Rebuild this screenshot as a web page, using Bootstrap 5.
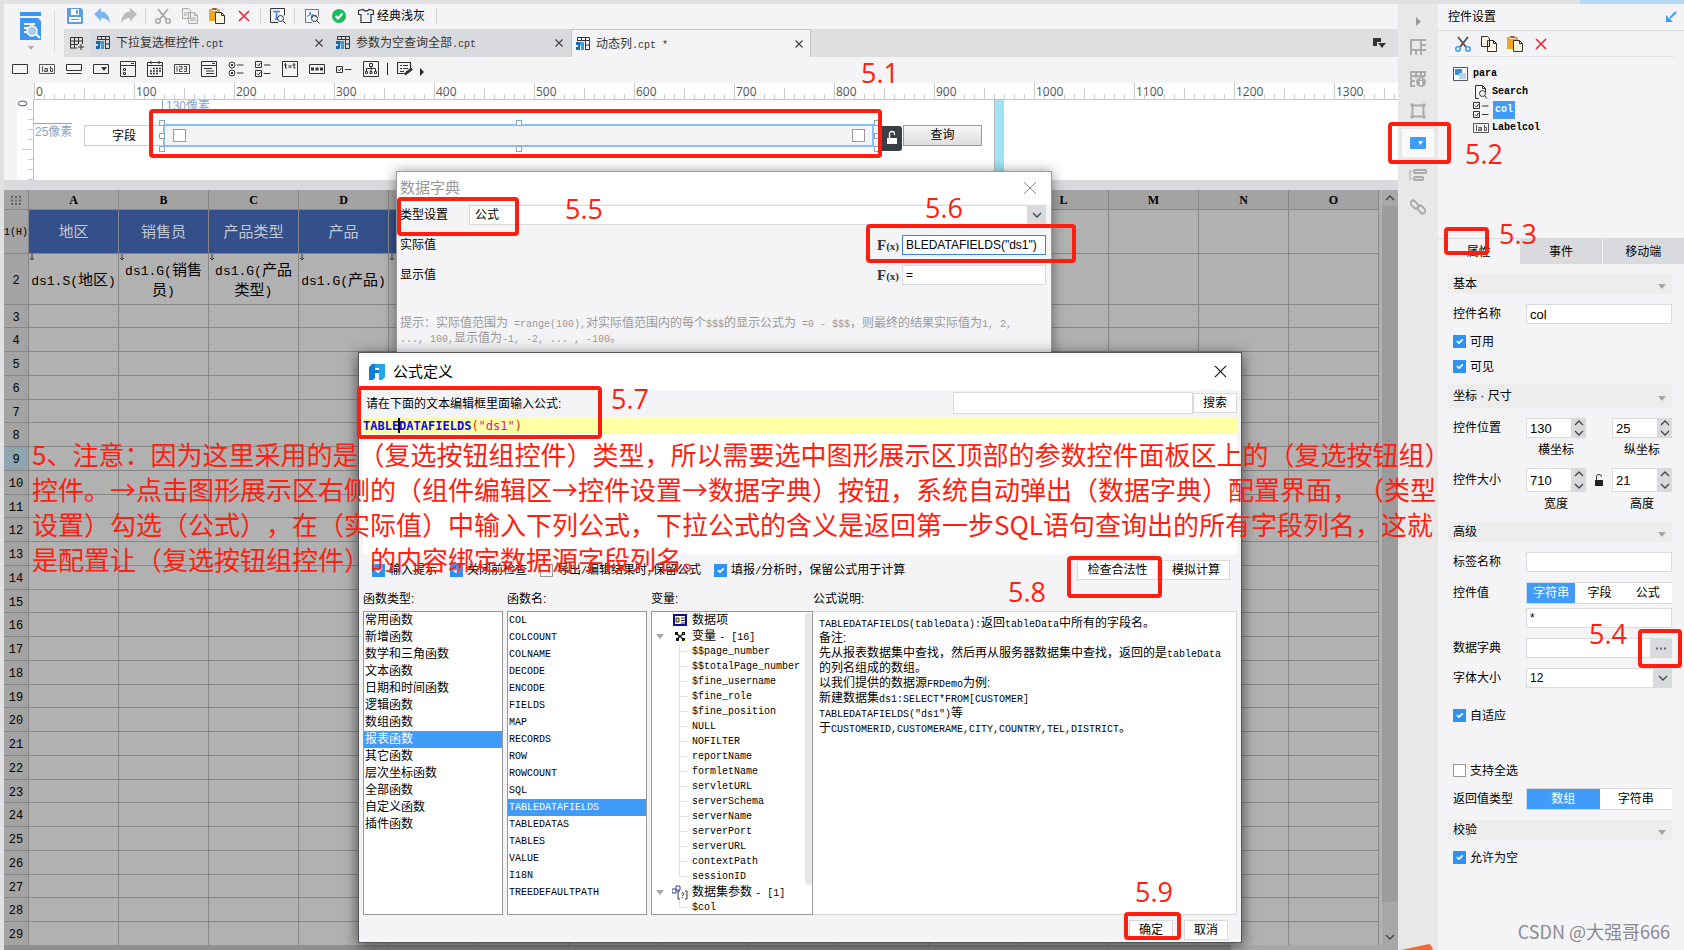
<!DOCTYPE html>
<html lang="zh-CN">
<head>
<meta charset="utf-8">
<meta name="viewport" content="width=device-width, initial-scale=1">
<title>动态列.cpt - 报表设计器</title>
<link href="https://cdn.jsdelivr.net/npm/bootstrap@5.3.0/dist/css/bootstrap.min.css" rel="stylesheet">
<style>
:root{--pane:#f4f4f7;--edge:#d9dadd;--blue:#419bf9;--red:#ff1e10}
body{font:12px/16px "Liberation Sans","Noto Sans CJK SC",sans-serif;color:#000;background:#e8e8e8;overflow:hidden}
.mn{font-family:"Liberation Mono","Noto Sans CJK SC",monospace;font-size:10px;line-height:10px}
svg{display:block;fill:none;stroke:#333;stroke-width:1}
.i16{width:16px;height:16px;flex:none}
.app{height:100vh;padding:4px 0 0 4px;background:#e0e0e3;overflow:hidden}
.app-accent{top:0;right:0;width:104px;height:4px;background:#b5daf2}
.work{min-width:0;background:var(--pane)}
.ibtn{width:23px;height:24px;padding:0;border:0;border-radius:0;display:flex;align-items:center;justify-content:center}
.vsep{width:1px;height:16px;background:#d0d1d4;margin:0 1px}
.brand{width:59px;height:53px;border:0;background:none;padding:0 8px 0 0}
.brand-line{width:1px;height:42px;background:#dcdce0}
.toolbar{height:25px;padding-bottom:2px}
.theme{padding:0 0 0 4px;border:0;background:none;gap:3px;margin-right:6px}
.tabs{height:28px;background:#dfdfe2;margin-left:1px}
.tab{width:240px;padding:0 7px 0 4px;gap:5px;background:#d9dadd;color:#333}
.tab.first{width:241px;padding-left:5px}
.tab.on{background:var(--pane);border:1px solid #c4c5c8;border-width:1px 1px 0;padding:0 6px 0 3px}
.tab-add{width:26px;background:#dfdfe2}
.x-btn{border:0;background:none;padding:0;width:10px;height:10px}
.widgets{height:26px;padding:0 0 3px 4px}
.ruler{height:17px;margin-left:30px;background:
 linear-gradient(90deg,#ccc 1px,transparent 1px) 0 0/100px 100% repeat-x,
 linear-gradient(90deg,#ccc 1px,transparent 1px) 50px 100%/100px 11px repeat-x,
 linear-gradient(90deg,#ccc 1px,transparent 1px) 0 100%/10px 5px repeat-x,#fff;
 border-bottom:1px solid #c4c4c4;font-size:12px;color:#555;overflow:hidden}
.ruler span{width:100px;flex:none;padding-left:2px;line-height:17px;font-family:"Open Sans",sans-serif}
.design{height:80px;background:#fff;overflow:hidden}
.vruler{width:30px;flex:none;border-left:13px solid var(--pane);border-right:1px solid #c4c4c4;background:
 linear-gradient(#ccc 1px,transparent 1px) 100% 49px/11px 100px repeat-y,
 linear-gradient(#ccc 1px,transparent 1px) 100% 9px/5px 10px repeat-y,#fff;writing-mode:vertical-rl;font:12px/22px "Open Sans",sans-serif;color:#555}
.sheet{width:961px;border-right:1px solid #bbb}
.sheet-end{width:9px;background:#9fe3f4}
.px-note{color:#8aa6c0}
.n130{left:128px;top:-2px;height:11px;overflow:hidden;border-left:1px solid #8aa6c0;padding-left:3px}
.n25{left:0;top:23px;border-top:1px solid #8aa6c0;padding-left:1px}
.lblcol{left:50px;top:25px;width:80px;height:21px;border:1px solid #ccc;line-height:21px;padding-left:27px}
.group-sel{left:129px;top:24px;width:711px;height:23px;border:2px solid #8abff8;background:var(--pane);padding:0 7px 0 8px}
.cb.cb{width:13px;height:13px;border:1px solid #999;border-radius:0;margin:0;flex:none;background-color:#fff;box-shadow:none}
.cb.cb:checked{background-color:#2f91f0;border-color:#2f91f0}
.hd{width:6px;height:6px;border:1px solid #8aa6c0;background:#fff}
.lockbox{left:848px;top:26px;width:20px;height:25px;background:#3a3e43;border:0;border-radius:0 3px 3px 0;padding:4px 3px}
.query{left:869px;top:25px;width:79px;height:21px;border:1px solid #999;background:linear-gradient(#f6f6f6,#dedede);padding:0;font-size:12px;line-height:18px}
.strip{height:10px;background:#d9dadd}
.gridbox{min-height:0;overflow:hidden;background:#b1b1b1}
.rpt{table-layout:fixed;border-collapse:separate;border-spacing:0;width:1375px}
.rpt th,.rpt td{padding:0;border:solid #868686;border-width:0 1px 1px 0;text-align:center;font-weight:400;vertical-align:middle;overflow:hidden}
.rpt th{background:#a3a3a3}
.rpt thead th{height:20px;padding-top:2px;font:bold 12px/16px "Liberation Serif",serif}
.rpt tbody th{padding-top:4px;font:12px/14px "Liberation Mono",monospace;white-space:nowrap}
.rpt tbody .hrow{font-size:10px;padding-top:3px}
.rpt .sel{background:#8fa5ad}
.rpt .hcell td{color:#c3c9d4;font-size:15px;padding-top:2px}
.rpt .hcell td:not(:empty){background:#34508a}
.rpt .dcell td{font:15px/18px "Noto Sans CJK SC",sans-serif;position:relative;padding-top:2px}
.rpt .dcell .mm{font:13px/16px "Liberation Mono",monospace}
.dn{position:absolute;left:0;top:0;width:6px;height:7px}
.sbar{width:16px;flex:none;background:#a8a8a8}
.sbar-thumb{flex:1;background:#9c9c9c}
.sbar-rest{height:27px}
.hbar{height:5px;background:#a8a8a8}
.hbar-thumb{width:88%;background:#8f8f8f}
.rail{width:40px;flex:none;background:#e8e8e8;padding-top:5px}
.rail .btn{width:32px;height:28px;padding:0;border:0;border-radius:0;margin-bottom:4px;display:flex;align-items:center;justify-content:center}
.rail .fold{height:24px;margin-bottom:0}
.rail .on{background:#fafafb}
.rail svg{stroke:#aaa;stroke-width:2}
.panel{width:246px;flex:none;background:var(--pane)}
.p-title{height:27px;padding:0 7px 0 10px;border-bottom:1px solid #d9dadd}
.p-tools{height:26px;margin:0 10px;gap:3px;border-bottom:1px solid #e2e2e5;padding-left:3px}
.wtree{padding:8px 0 0 15px;height:181px}
.wtree li{height:18px;gap:4px}
.wtree .kid{padding-left:20px;gap:3px}
.wtree .hit{background:var(--blue);color:#fff;padding:0 2px;margin-left:1px}
.wtree .mn{font-family:"Liberation Mono",monospace;font-size:10px;line-height:18px;font-weight:700}
.ptabs{height:26px;gap:1px;border-top:1px solid #d9dadd}
.ptabs button{flex:1;border:0;background:#d9dadd;padding:0;font-size:12px}
.ptabs .on{background:var(--pane)}
.props{padding:10px 12px 0 10px}
.sec{height:20px;background:#ededee;padding:0 5px;width:100%}
.sec.tall{height:24px}
.tri{width:0;height:0;border:4px solid transparent;border-top:5px solid #a5a5a5;border-bottom:0;margin:4px 1px 0 0}
.prow{display:flex;align-items:center;height:20px}
.prow.h22{height:22px}.prow.h24{height:24px}
.prow>label:first-child,.prow>.cap{width:78px;flex:none;padding-left:5px}
.chk{height:25px;gap:4px;padding-left:5px;display:flex;align-items:center}
.g4{margin-top:4px}.g5{margin-top:5px}.g6{margin-top:6px}.g10{margin-top:10px}.g15{margin-top:15px}.g30{margin-top:30px}
.fld{height:100%;min-height:0;border:1px solid var(--edge);border-radius:0;padding:0 3px;font:12px/16px "Liberation Sans","Noto Sans CJK SC",sans-serif;color:#000;background-color:#fff;min-width:0;box-shadow:none}
.fld.big{font-size:13px}
.grey{background:var(--edge);border:0;padding:0;display:flex;align-items:center;justify-content:center;flex:none}
.spin{width:60px;height:100%}
.spin .grey{width:14px;height:50%}
.sub{height:24px;padding-left:78px;display:flex;align-items:center;justify-content:space-between;text-align:center}
.sub span{width:60px}
.seg{height:100%;border:1px solid var(--edge);border-right:0;flex:1}
.seg button{flex:1;border:0;background:#fff;padding:0;font-size:12px}
.seg .on{background:var(--blue);color:#fff}
.combo{appearance:none;background:#fff}
.arrow{width:19px;height:20px;right:0;top:0;pointer-events:none}
.dlg{background:var(--pane);border:1px solid #9a9a9a;box-shadow:0 1px 12px rgba(0,0,0,.45)}
.dict{left:396px;top:171px;width:656px;height:190px}
.dict-title{height:32px;background:#fff;color:#999;font-size:15px;padding:0 14px 0 3px}
.dict-body{padding:1px 5px 0 3px}
.dict-body .combo{padding-left:5px}
.dict-body .w144{width:144px}
.fx{font:bold 15px/16px "Liberation Serif",serif;color:#333;margin-right:3px}
.fx small{font-size:11px}
.hint{color:#999;line-height:15px;margin-top:31px}
.calc{left:358px;top:352px;width:884px;border-color:#555;box-shadow:0 3px 14px rgba(0,0,0,.6);padding-bottom:2px}
.calc-title{height:37px;background:#fff;font-size:15px;padding:0 14px 0 10px}
.calc-body{padding:0 4px}
.bt{border:1px solid var(--edge);background:#fff;border-radius:0;padding:0;height:20px;font-size:12px;line-height:16px;color:#000}
.find{height:28px;padding-top:2px}
.find label{padding:4px 0 0 3px}
.find .fld{width:240px;height:22px}
.find .bt{width:44px;margin-top:1px}
.editor{height:136px;background:#fff}
.code{height:16px;background:#ffffa6;font:12px/16px "DejaVu Sans Mono",monospace;color:#f01e10}
.code b{color:#0a0ae6}.code i{color:#d5149b;font-style:normal}
.caret{left:35px;top:0;width:2px;height:15px;background:#000}
.opts{height:32px;padding:0 7px 0 9px;gap:13px}
.opts .chk{padding:0;gap:4px}
.cols{gap:4px;padding-top:3px}
.cap-h{height:20px;margin-bottom:2px;line-height:20px}
.lst{height:304px;border:1px solid #999;background:#fff;margin:0;padding:0;list-style:none;overflow:hidden}
.c140{width:140px}.c162{width:162px}
.names li{height:17px;line-height:17px;padding-left:1px}
.names .hit{background:var(--blue);color:#fff}
.vars{padding-left:40px;position:relative}
.vars li{height:15px;line-height:15px;position:relative}
.vars .top{height:16px;line-height:16px}
.vars .top svg{position:absolute;left:-20px;top:1px;width:16px;height:15px}
.vars .kid::before{content:"";position:absolute;left:-13px;top:0;width:9px;height:8px;border:solid #e2e2e2;border-width:0 0 1px 1px}
.vars .kid+.kid::before{top:-8px;height:16px}
.vars .tri{position:absolute;left:-36px;top:6px;margin:0}
.vars .vbar{right:0;top:1px;width:7px;height:272px;background:#e6e6e6;border-radius:3px}
.desc{border-color:var(--edge);border-left:0;padding:4px 12px 0 6px;line-height:15px}
.desc p{margin:0}
.foot{margin-top:5px;padding-right:9px;gap:11px}
.foot .bt{width:44px}
.mark-box{border:4px solid var(--red);border-radius:4px;pointer-events:none}
.mark-no{color:var(--red);font:27px/30px "Open Sans",sans-serif;pointer-events:none}
.remark{left:32px;top:436px;color:var(--red);font:26px/35px "Noto Sans CJK SC",sans-serif;white-space:pre;margin:0;pointer-events:none;text-spacing-trim:space-all;font-kerning:none;font-feature-settings:"chws" 0,"halt" 0}
.wmark{right:14px;bottom:6px;color:#8b8b8f;font:18px/26px "Noto Sans CJK SC",sans-serif}
.sticker{right:251px;bottom:0;width:32px;height:6px}
</style>
</head>
<body>
<svg width="0" height="0" class="position-absolute">
 <symbol id="save" viewBox="0 0 16 16"><path d="M0 1q0-1 1-1h13l2 2v13q0 1-1 1H1q-1 0-1-1z" fill="#5e9fe0" stroke="none"/><path d="M4 1h8v6H4zM2 9h12v5H2z" fill="#fff" stroke="none"/><path d="M9 2h2v4H9zM4 11h8v1H4z" fill="#5e9fe0" stroke="none"/></symbol>
 <symbol id="undo" viewBox="0 0 16 16"><path d="M0 6l7-6v3.500q8 0 9 11.500-3-5-9-5v3.500z" fill="#7db4ee" stroke="none"/></symbol>
 <symbol id="redo" viewBox="0 0 16 16"><path d="M16 6L9 0v3.500q-8 0-9 11.500 3-5 9-5v3.500z" fill="#bbb" stroke="none"/></symbol>
 <symbol id="cut" viewBox="0 0 16 16"><path d="M3 1l8 10M13 1L5 11" stroke="#555" stroke-width="2"/><circle cx="3" cy="13" r="2.200" stroke="#419bf9" stroke-width="1.600"/><circle cx="13" cy="13" r="2.200" stroke="#419bf9" stroke-width="1.600"/></symbol>
 <symbol id="cutg" viewBox="0 0 16 16"><path d="M3 1l8 10M13 1L5 11" stroke="#aaa" stroke-width="2"/><circle cx="3" cy="13" r="2.200" stroke="#aaa" stroke-width="1.600"/><circle cx="13" cy="13" r="2.200" stroke="#aaa" stroke-width="1.600"/></symbol>
 <symbol id="copy" viewBox="0 0 16 16"><path d="M.5.5h6l2 2v8h-8zM6.500 4.500h6l3 3v8h-9z" fill="#fdf6e0"/><path d="M12.500 4.500v3h3"/></symbol>
 <symbol id="copyg" viewBox="0 0 16 16"><path d="M.5.5h6l2 2v8h-8zM6.500 4.500h6l3 3v8h-9zM12.500 4.500v3h3M8 10h6M8 12h6M2 5h4M2 7h3" fill="#eee" stroke="#aaa"/></symbol>
 <symbol id="paste" viewBox="0 0 16 16"><path d="M0 1h3v2h5V1h3v12H0z" fill="#efa81b" stroke="none"/><path d="M3.500.5h4v1h-4z" fill="#b7521c" stroke="#b7521c"/><path d="M6.500 4.500h6l3 3v8h-9z" fill="#fdf6e0"/><path d="M12.500 4.500v3h3"/></symbol>
 <symbol id="del" viewBox="0 0 16 16"><path d="M3 3l10 10M13 3L3 13" stroke="#e8252d" stroke-width="1.600"/></symbol>
 <symbol id="tfind" viewBox="0 0 16 16"><path d="M8 14.500H.5V.5h14v7"/><path d="M3 3.500h7M6.500 3v8M5 11h3" stroke="#3c8fe0" stroke-width="1.600"/><circle cx="10.500" cy="10.500" r="3"/><path d="M13 13l2.500 2.500"/></symbol>
 <symbol id="wave" viewBox="0 0 16 16"><path d="M8 14.500H1.500v-13h13v7" stroke="#777"/><path d="M3 8h2l1-4 2 6 1-4 1 2h3" stroke="#3c8fe0"/><circle cx="10.500" cy="10.500" r="3"/><path d="M13 13l2.500 2.500"/></symbol>
 <symbol id="ok" viewBox="0 0 16 16"><circle cx="8" cy="8" r="7" fill="#17bd5b" stroke="none"/><path d="M4.500 8l2.500 2.500 4.500-5" stroke="#fff" stroke-width="2"/></symbol>
 <symbol id="shirt" viewBox="0 0 16 16"><path d="M5 1.500q3 3 6 0l4.500 1v4H13v8H3v-8H.5v-4z" stroke-width="1.200"/><path d="M9 5h2v2H9z" fill="#419bf9" stroke="none"/></symbol>
 <symbol id="addtab" viewBox="0 0 16 16"><path d="M1.500 13V2.500h12V9M1.500 6h12M5.500 2.500V13M9.500 2.500V9M1 9.500h8M1 13h7M12 9v6M9 12h6"/></symbol>
 <symbol id="cpt" viewBox="0 0 16 16"><path d="M2.500 5V1.500h12v12H10M2 4.500h12M6.500 1.500v3M10.500 1.500v12M10 9h4"/><path d="M1 6h4v7q0 1-1 1H1v-3h2V9H1z" fill="#1c67b4" stroke="none"/><path d="M5 6h4v8H6V9H5z" fill="#29a5e5" stroke="none"/></symbol>
 <symbol id="cross" viewBox="0 0 10 10"><path d="M1.500 1.500l7 7M8.500 1.500l-7 7" stroke="#444" stroke-width="1.200"/></symbol>
 <symbol id="w1" viewBox="0 0 16 16"><path d="M.5 3.500h15v9H.5z"/></symbol>
 <symbol id="w2" viewBox="0 0 16 16"><path d="M.5 3.500h15v9H.5zM3.500 5v6M5.500 7.500h3v3h-3v-1.500h3M11.500 5v5.500h2v-3h-2" stroke="#555"/></symbol>
 <symbol id="w3" viewBox="0 0 16 16"><path d="M.5 3.500h15v6H.5zM.5 12.500h15"/></symbol>
 <symbol id="w4" viewBox="0 0 16 16"><path d="M.5 3.500h15v9H.5z"/><path d="M8 6h6l-3 4z" fill="#333" stroke="none"/></symbol>
 <symbol id="w5" viewBox="0 0 16 16"><path d="M.5.5h15v15H.5zM.5 4.500h15M3.500 7.500h2v2h-2zM3.500 11.500h2v2h-2zM11 2.500h3"/></symbol>
 <symbol id="w6" viewBox="0 0 16 16"><path d="M.5 1.500h15v14H.5zM.5 4.500h15M4 0v3M12 0v3"/><path d="M6 7.500h8M3 10h11M3 12.500h8" stroke-dasharray="2 1" stroke-width="1.600"/></symbol>
 <symbol id="w7" viewBox="0 0 16 16"><path d="M.5 3.500h15v9H.5zM3 5.500v5M5 5.500h3v2.500H5.500v2.500h3M10 5.500h2.500v5H10M10 8h2.500" stroke="#444"/></symbol>
 <symbol id="w8" viewBox="0 0 16 16"><path d="M.5.5h15v15H.5zM.5 4.500h15M3 7.500h8M5 10h8M5 12.500h8M11 2.500h3"/></symbol>
 <symbol id="w9" viewBox="0 0 16 16"><circle cx="4" cy="4" r="3"/><circle cx="4" cy="12" r="3"/><path d="M3 4h2M3 12h2" stroke-width="2"/><path d="M9 4h6.500M9 12h6.500"/></symbol>
 <symbol id="w10" viewBox="0 0 16 16"><path d="M.5.5h6v6h-6zM.5 9.500h6v6h-6zM2 3.500L3.500 5 5.500 2M2 12.500L3.500 14l2-3M9 4h6.500M9 12.500h6.500"/></symbol>
 <symbol id="w11" viewBox="0 0 16 16"><path d="M.5.5h15v15H.5zM3.500 2v5h1.500M2 4h3M6.500 4l3 3M9.500 4l-3 3M12 2v5h1.500M10.500 4h3"/></symbol>
 <symbol id="w12" viewBox="0 0 16 16"><path d="M.5 3.500h15v9H.5z"/><path d="M2 8h12" stroke-width="3" stroke-dasharray="3 1.500"/></symbol>
 <symbol id="w13" viewBox="0 0 16 16"><path d="M.5 5.500h6v6h-6zM2 8.500L3.500 10l2-3M9 8.500h6.500"/></symbol>
 <symbol id="w14" viewBox="0 0 16 16"><path d="M.5.5h15v15H.5zM6.500 2.500h3v3h-3zM8 5.500v5M3.500 10V7.500h9V10M2.500 10.500h2v2h-2zM7 10.500h2v2H7zM11.500 10.500h2v2h-2z"/></symbol>
 <symbol id="w15" viewBox="0 0 16 16"><path d="M13.500 7V1.500H.5v11h9M3 4.500h2M6 4.500h5M3 7.500h2M6 7.500h5M3 10.500h4" stroke-width="1.200"/><path d="M8 14l1-3 5-4 1.500 1.500-5 4z" fill="#333"/></symbol>
 <symbol id="lock" viewBox="0 0 14 16"><path d="M4.500 8V4q0-2.500 2.500-2.500T9.500 4v1" stroke="#fff" stroke-width="1.400"/><path d="M2 8h10v6H2z" fill="#fff" stroke="none"/></symbol>
 <symbol id="lockd" viewBox="0 0 10 14"><path d="M2.500 7V3.500q0-2 2.500-2t2.500 2V4" stroke="#333"/><path d="M1 7h8v6H1z" fill="#222" stroke="none"/></symbol>
 <symbol id="up" viewBox="0 0 10 6"><path d="M1 5l4-4 4 4" stroke="#444" stroke-width="1.300"/></symbol>
 <symbol id="down" viewBox="0 0 10 6"><path d="M1 1l4 4 4-4" stroke="#444" stroke-width="1.300"/></symbol>
 <symbol id="fr" viewBox="0 0 16 16"><path d="M3 0h3v6h4v3H6v5L4 16H0V3z" fill="#0b7fd8" stroke="none"/><path d="M6 0h10v13l-3 3h-3V4H6z" fill="#22a8ea" stroke="none"/></symbol>
</svg>

<div class="app d-flex position-relative">
 <div class="app-accent position-absolute"></div>
 <main class="work d-flex flex-column flex-grow-1">
  <div class="d-flex">
   <button class="brand d-flex align-items-center justify-content-between" aria-label="新建">
    <svg class="ms-3" width="21" height="40" viewBox="0 0 21 40"><path d="M0 1h21v4H0zM0 7h18l3 3v19H0z" fill="#3a97f5" stroke="none"/><path d="M4 13h11M4 17h4M4 21h3" stroke="#fff" stroke-width="2"/><circle cx="12" cy="20" r="5" fill="#a9cdf0" stroke="#fff" stroke-width="1.500"/><path d="M16 23l4 4" stroke="#fff" stroke-width="2"/><path d="M8 35h6l-3 4z" fill="#aaa" stroke="none"/></svg>
    <span class="brand-line"></span>
   </button>
   <div class="flex-grow-1">
    <div class="toolbar d-flex align-items-center gap-1">
     <button class="btn ibtn" aria-label="保存"><svg class="i16"><use href="#save"/></svg></button>
     <button class="btn ibtn" aria-label="撤销"><svg class="i16"><use href="#undo"/></svg></button>
     <button class="btn ibtn" aria-label="重做"><svg class="i16"><use href="#redo"/></svg></button>
     <span class="vsep"></span>
     <button class="btn ibtn" aria-label="剪切"><svg class="i16"><use href="#cutg"/></svg></button>
     <button class="btn ibtn" aria-label="复制"><svg class="i16"><use href="#copyg"/></svg></button>
     <button class="btn ibtn" aria-label="粘贴"><svg class="i16"><use href="#paste"/></svg></button>
     <button class="btn ibtn" aria-label="删除"><svg class="i16"><use href="#del"/></svg></button>
     <span class="vsep"></span>
     <button class="btn ibtn" aria-label="查找"><svg class="i16"><use href="#tfind"/></svg></button>
     <span class="vsep"></span>
     <button class="btn ibtn" aria-label="检测"><svg class="i16"><use href="#wave"/></svg></button>
     <button class="btn ibtn" aria-label="校验"><svg class="i16"><use href="#ok"/></svg></button>
     <button class="theme d-flex align-items-center"><svg class="i16"><use href="#shirt"/></svg>经典浅灰</button>
     <span class="vsep"></span>
    </div>
    <div class="tabs d-flex">
     <button class="btn ibtn tab-add h-100" aria-label="新建标签"><svg class="i16"><use href="#addtab"/></svg></button>
     <div class="tab first d-flex align-items-center"><svg class="i16"><use href="#cpt"/></svg><span class="me-auto">下拉复选框控件<span class="mn">.cpt</span></span><button class="x-btn" aria-label="关闭"><svg width="10" height="10"><use href="#cross"/></svg></button></div>
     <div class="tab d-flex align-items-center"><svg class="i16"><use href="#cpt"/></svg><span class="me-auto">参数为空查询全部<span class="mn">.cpt</span></span><button class="x-btn" aria-label="关闭"><svg width="10" height="10"><use href="#cross"/></svg></button></div>
     <div class="tab on d-flex align-items-center"><svg class="i16"><use href="#cpt"/></svg><span class="me-auto">动态列<span class="mn">.cpt *</span></span><button class="x-btn" aria-label="关闭"><svg width="10" height="10"><use href="#cross"/></svg></button></div>
     <button class="btn ibtn ms-auto me-2 h-100" aria-label="标签列表"><svg width="14" height="12" viewBox="0 0 14 12"><path d="M1 1h8v4H5v4H1zM6 6h8l-4 5z" fill="#333" stroke="none"/></svg></button>
    </div>
   </div>
  </div>
  <div class="widgets d-flex align-items-center gap-1" id="widgets"></div>
  <div class="ruler d-flex" id="ruler"></div>
  <div class="design d-flex">
   <div class="vruler">0</div>
   <div class="sheet position-relative flex-shrink-0">
    <span class="px-note n130 position-absolute">130像素</span>
    <span class="px-note n25 position-absolute">25像素</span>
    <div class="lblcol position-absolute">字段</div>
    <div class="group-sel position-absolute d-flex align-items-center justify-content-between"><input type="checkbox" class="form-check-input cb" aria-label="选项一"><input type="checkbox" class="form-check-input cb" aria-label="选项二"></div>
    <i class="hd position-absolute" style="left:125px;top:20px"></i><i class="hd position-absolute" style="left:125px;top:33px"></i><i class="hd position-absolute" style="left:125px;top:46px"></i>
    <i class="hd position-absolute" style="left:482px;top:20px"></i><i class="hd position-absolute" style="left:482px;top:46px"></i>
    <i class="hd position-absolute" style="left:840px;top:20px"></i><i class="hd position-absolute" style="left:840px;top:33px"></i><i class="hd position-absolute" style="left:840px;top:46px"></i>
    <button class="lockbox position-absolute" aria-label="锁定"><svg width="14" height="16"><use href="#lock"/></svg></button>
    <button class="query position-absolute">查询</button>
   </div>
   <div class="sheet-end flex-shrink-0"></div>
  </div>
  <div class="strip"></div>
  <div class="gridbox d-flex flex-grow-1">
   <div class="flex-grow-1 overflow-hidden"><table class="rpt" id="report"></table></div>
   <div class="sbar d-flex flex-column">
    <button class="grey bg-transparent w-100" style="height:16px" aria-label="向上"><svg width="10" height="6"><use href="#up"/></svg></button>
    <div class="sbar-thumb"></div><div class="sbar-rest"></div>
    <button class="grey bg-transparent w-100" style="height:16px" aria-label="向下"><svg width="10" height="6"><use href="#down"/></svg></button>
   </div>
  </div>
  <div class="hbar d-flex"><div class="hbar-thumb"></div></div>
 </main>

 <nav class="rail d-flex flex-column align-items-center">
  <button class="btn fold" aria-label="收起"><svg width="16" height="16" viewBox="0 0 16 16"><path d="M6 4l5 4.500L6 13z" fill="#999" stroke="none"/></svg></button>
  <button class="btn" aria-label="单元格元素"><svg width="16" height="16" viewBox="0 0 16 16"><path d="M1 16V1h15M1 11h10V1M6 11v5M11 11v5M11 6h5M11 11h5"/></svg></button>
  <button class="btn" aria-label="单元格属性"><svg width="16" height="16" viewBox="0 0 16 16"><path d="M5 15H1V1h14v4M1 5h14M6 1v6M11 1v4M1 10h4"/><circle cx="11" cy="11" r="5" fill="#aaa" stroke="none"/><path d="M11 7.500v1M11 10v4" stroke="#fff"/></svg></button>
  <button class="btn" aria-label="悬浮元素"><svg width="16" height="16" viewBox="0 0 16 16"><path d="M2.500 2.500h11v11h-11z"/><path d="M.5.5h3v3h-3zM12.500.5h3v3h-3zM.5 12.500h3v3h-3zM12.500 12.500h3v3h-3z" fill="#aaa" stroke="none"/></svg></button>
  <button class="btn on" aria-label="控件设置"><svg width="16" height="12" viewBox="0 0 16 12"><rect width="16" height="12" rx="1" fill="#419bf9" stroke="none"/><path d="M8 4h5l-2.500 4z" fill="#fff" stroke="none"/></svg></button>
  <button class="btn" aria-label="条件属性"><svg width="18" height="14" viewBox="0 0 18 14"><path d="M3 3H1v8h2" stroke-width="1"/><rect x="5" y="2" width="12" height="3" rx="1"/><rect x="5" y="9" width="9" height="3" rx="1"/></svg></button>
  <button class="btn" aria-label="超级链接"><svg width="16" height="16" viewBox="0 0 16 16"><rect x="0" y="3" width="9" height="5" rx="2.500" transform="rotate(45 4.500 5.500)"/><rect x="7" y="8" width="9" height="5" rx="2.500" transform="rotate(45 11.500 10.500)"/></svg></button>
 </nav>

 <aside class="panel">
  <div class="p-title d-flex align-items-center justify-content-between">控件设置<svg width="12" height="12" viewBox="0 0 12 12"><path d="M11 1L5 7" stroke="#419bf9" stroke-width="2"/><path d="M1 4l7 7H1z" fill="#419bf9" stroke="none"/></svg></div>
  <div class="p-tools d-flex align-items-center">
   <button class="btn ibtn" aria-label="剪切"><svg class="i16"><use href="#cut"/></svg></button>
   <button class="btn ibtn" aria-label="复制"><svg class="i16"><use href="#copy"/></svg></button>
   <button class="btn ibtn" aria-label="粘贴"><svg class="i16"><use href="#paste"/></svg></button>
   <button class="btn ibtn" aria-label="删除"><svg class="i16"><use href="#del"/></svg></button>
  </div>
  <ul class="wtree list-unstyled mb-0">
   <li class="d-flex align-items-center"><svg class="i16" viewBox="0 0 16 16"><path d="M.5 1.500h14v13H.5z" fill="#fff" stroke="#555"/><path d="M2 3h7v6H2z" fill="#3391cf" stroke="none"/><path d="M6 7h7v6H6z" fill="#b8d0f4" stroke="none"/></svg><span class="mn">para</span></li>
   <li class="kid d-flex align-items-center"><svg class="i16" viewBox="0 0 16 16"><path d="M6 14.500H2.500v-13h7l3 3V8M9.500 1.500v3h3"/><circle cx="9.500" cy="9.500" r="3"/><path d="M12 12l2 2.500"/></svg><span class="mn">Search</span></li>
   <li class="kid d-flex align-items-center"><svg class="i16"><use href="#w10"/></svg><span class="mn hit">col</span></li>
   <li class="kid d-flex align-items-center"><svg class="i16"><use href="#w2"/></svg><span class="mn">Labelcol</span></li>
  </ul>
  <div class="ptabs d-flex"><button class="on">属性</button><button>事件</button><button>移动端</button></div>
  <form class="props">
   <div class="sec d-flex align-items-center justify-content-between">基本<i class="tri"></i></div>
   <div class="prow g10"><label for="nm">控件名称</label><input id="nm" class="form-control fld big" value="col"></div>
   <div class="chk g5"><input type="checkbox" class="form-check-input cb" id="c1" checked><label for="c1">可用</label></div>
   <div class="chk"><input type="checkbox" class="form-check-input cb" id="c2" checked><label for="c2">可见</label></div>
   <div class="sec tall g5 d-flex align-items-center justify-content-between">坐标 · 尺寸<i class="tri"></i></div>
   <div class="prow g10"><label for="px">控件位置</label>
    <div class="spin d-flex"><input id="px" class="form-control fld big" value="130"><div><button type="button" class="grey" aria-label="加"><svg width="10" height="6"><use href="#up"/></svg></button><button type="button" class="grey" aria-label="减"><svg width="10" height="6"><use href="#down"/></svg></button></div></div>
    <div class="spin d-flex ms-auto"><input aria-label="纵坐标" class="form-control fld big" value="25"><div><button type="button" class="grey" aria-label="加"><svg width="10" height="6"><use href="#up"/></svg></button><button type="button" class="grey" aria-label="减"><svg width="10" height="6"><use href="#down"/></svg></button></div></div></div>
   <div class="sub"><span>横坐标</span><span>纵坐标</span></div>
   <div class="prow h24 g6"><label for="sw">控件大小</label>
    <div class="spin d-flex"><input id="sw" class="form-control fld big" value="710"><div><button type="button" class="grey" aria-label="加"><svg width="10" height="6"><use href="#up"/></svg></button><button type="button" class="grey" aria-label="减"><svg width="10" height="6"><use href="#down"/></svg></button></div></div>
    <svg class="mx-auto" width="10" height="14"><use href="#lockd"/></svg>
    <div class="spin d-flex"><input aria-label="高度" class="form-control fld big" value="21"><div><button type="button" class="grey" aria-label="加"><svg width="10" height="6"><use href="#up"/></svg></button><button type="button" class="grey" aria-label="减"><svg width="10" height="6"><use href="#down"/></svg></button></div></div></div>
   <div class="sub"><span>宽度</span><span>高度</span></div>
   <div class="sec g6 d-flex align-items-center justify-content-between">高级<i class="tri"></i></div>
   <div class="prow g10"><label for="tg">标签名称</label><input id="tg" class="form-control fld"></div>
   <div class="prow h22 g10"><span class="cap">控件值</span><div class="seg d-flex"><button type="button" class="on">字符串</button><button type="button">字段</button><button type="button">公式</button></div></div>
   <div class="prow g4"><label for="vl" aria-label="控件值"></label><input id="vl" class="form-control fld" value="*"></div>
   <div class="prow g10"><label for="dd">数据字典</label><input id="dd" class="form-control fld"><button type="button" class="grey h-100" style="width:21px" aria-label="编辑数据字典"><svg width="11" height="3" viewBox="0 0 11 3"><path d="M0 1.500h2M4 1.500h2M8 1.500h2" stroke="#666" stroke-width="2"/></svg></button></div>
   <div class="prow g10"><label for="fs">字体大小</label><div class="position-relative w-100 h-100"><select id="fs" class="form-control fld combo w-100"><option>12</option></select><span class="grey arrow position-absolute"><svg width="10" height="6"><use href="#down"/></svg></span></div></div>
   <div class="chk g15"><input type="checkbox" class="form-check-input cb" id="c3" checked><label for="c3">自适应</label></div>
   <div class="chk g30"><input type="checkbox" class="form-check-input cb" id="c4"><label for="c4">支持全选</label></div>
   <div class="prow h22 g5"><span class="cap">返回值类型</span><div class="seg d-flex"><button type="button" class="on">数组</button><button type="button">字符串</button></div></div>
   <div class="sec g10 d-flex align-items-center justify-content-between">校验<i class="tri"></i></div>
   <div class="chk g5"><input type="checkbox" class="form-check-input cb" id="c5" checked><label for="c5">允许为空</label></div>
  </form>
 </aside>

 <section class="dlg dict position-absolute" role="dialog" aria-label="数据字典">
  <div class="dict-title d-flex align-items-center justify-content-between">数据字典<button class="x-btn" style="width:14px;height:14px" aria-label="关闭"><svg width="14" height="14" viewBox="0 0 14 14"><path d="M1 1l12 12M13 1L1 13" stroke="#888"/></svg></button></div>
  <div class="dict-body">
   <div class="prow"><label for="tp" class="ps-0" style="width:69px">类型设置</label><div class="position-relative flex-grow-1 h-100"><select id="tp" class="form-control fld combo w-100"><option>公式</option></select><span class="grey arrow position-absolute"><svg width="10" height="6"><use href="#down"/></svg></span></div></div>
   <div class="prow g10"><label for="rv" class="ps-0">实际值</label><span class="fx ms-auto">F<small>(x)</small></span><input id="rv" class="form-control fld w144" style="border-color:#3b83e6" value='BLEDATAFIELDS("ds1")'></div>
   <div class="prow g10"><label for="dv" class="ps-0">显示值</label><span class="fx ms-auto">F<small>(x)</small></span><input id="dv" class="form-control fld w144" value="="></div>
   <div class="hint">提示：实际值范围为<span class="mn"> =range(100),</span>对实际值范围内的每个<span class="mn">$$$</span>的显示公式为<span class="mn"> =0 - $$$</span>，则最终的结果实际值为<span class="mn">1, 2,<br>..., 100,</span>显示值为<span class="mn">-1, -2, ... , -100</span>。</div>
  </div>
 </section>

 <section class="dlg calc position-absolute" role="dialog" aria-label="公式定义">
  <div class="calc-title d-flex align-items-center"><svg class="i16 me-2"><use href="#fr"/></svg>公式定义<button class="x-btn ms-auto" style="width:13px;height:14px" aria-label="关闭"><svg width="13" height="13" viewBox="0 0 14 14"><path d="M1 1l12 12M13 1L1 13" stroke="#111" stroke-width="1.200"/></svg></button></div>
  <div class="calc-body">
   <div class="find d-flex"><label class="me-auto" for="fq">请在下面的文本编辑框里面输入公式:</label><input id="fq" class="form-control fld"><button class="bt">搜索</button></div>
   <div class="editor"><div class="code position-relative"><b>TABLEDATAFIELDS</b>(<i>"ds1"</i>)<span class="caret position-absolute"></span></div></div>
   <div class="opts d-flex align-items-center">
    <div class="chk"><input type="checkbox" class="form-check-input cb" id="o1" checked><label for="o1">输入提示</label></div>
    <div class="chk"><input type="checkbox" class="form-check-input cb" id="o2" checked><label for="o2">关闭前检查</label></div>
    <div class="chk"><input type="checkbox" class="form-check-input cb" id="o3"><label for="o3">导出<span class="mn">/</span>编辑结果时<span class="mn">,</span>保留公式</label></div>
    <div class="chk"><input type="checkbox" class="form-check-input cb" id="o4" checked><label for="o4">填报<span class="mn">/</span>分析时，保留公式用于计算</label></div>
    <div class="ms-auto d-flex gap-1"><button class="bt" style="width:81px">检查合法性</button><button class="bt" style="width:68px">模拟计算</button></div>
   </div>
   <div class="cols d-flex">
    <div class="c140"><div class="cap-h">函数类型:</div><ul class="lst names" id="kinds"></ul></div>
    <div class="c140"><div class="cap-h">函数名:</div><ul class="lst names mn" id="funcs"></ul></div>
    <div class="d-flex flex-grow-1">
     <div class="c162 flex-shrink-0"><div class="cap-h">变量:</div><ul class="lst vars" id="vars"></ul></div>
     <div class="flex-grow-1"><div class="cap-h">公式说明:</div>
      <div class="lst desc">
       <p><span class="mn">TABLEDATAFIELDS(tableData):</span>返回<span class="mn">tableData</span>中所有的字段名。</p>
       <p>备注:</p>
       <p>先从报表数据集中查找，然后再从服务器数据集中查找，返回的是<span class="mn">tableData</span><br>的列名组成的数组。</p>
       <p>以我们提供的数据源<span class="mn">FRDemo</span>为例:</p>
       <p>新建数据集<span class="mn">ds1:SELECT*FROM[CUSTOMER]</span></p>
       <p><span class="mn">TABLEDATAFIELDS("ds1")</span>等</p>
       <p>于<span class="mn">CUSTOMERID,CUSTOMERAME,CITY,COUNTRY,TEL,DISTRICT</span>。</p>
      </div></div>
    </div>
   </div>
   <div class="foot d-flex justify-content-end"><button class="bt">确定</button><button class="bt">取消</button></div>
  </div>
 </section>

 <div id="marks"></div>
 <p class="remark position-absolute">5、注意：因为这里采用的是（复选按钮组控件）类型，所以需要选中图形展示区顶部的参数控件面板区上的（复选按钮组）
控件。→点击图形展示区右侧的（组件编辑区→控件设置→数据字典）按钮，系统自动弹出（数据字典）配置界面，（类型
设置）勾选（公式），在（实际值）中输入下列公式，下拉公式的含义是返回第一步SQL语句查询出的所有字段列名，这就
是配置让（复选按钮组控件）的内容绑定数据源字段列名。</p>
 <svg class="sticker position-absolute" viewBox="0 0 32 6"><path d="M0 6L28 0q2 0 4 6z" fill="#f96b35" stroke="none"/></svg>
 <div class="wmark position-absolute">CSDN @大强哥666</div>
</div>

<script src="https://cdn.jsdelivr.net/npm/bootstrap@5.3.0/dist/js/bootstrap.bundle.min.js"></script>
<script>
const $ = id => document.getElementById(id);
const wnames = ['文本','标签','按钮','下拉框','下拉复选框','日期','数字','下拉树','单选按钮组','复选按钮组','文本域','密码','复选框','视图树'];
$('widgets').innerHTML = wnames.map((n, i) => `<button class="btn ibtn" aria-label="${n}"><svg class="i16"><use href="#w${i + 1}"/></svg></button>`).join('')
 + '<span class="vsep bg-dark" style="height:12px"></span><button class="btn ibtn" aria-label="更多控件"><svg class="i16"><use href="#w15"/></svg></button><svg width="4" height="8" viewBox="0 0 4 8" style="margin-top:7px"><path d="M0 0l4 4-4 4z" fill="#222" stroke="none"/></svg>';
$('ruler').innerHTML = Array.from({length: 14}, (_, i) => `<span>${i * 100}</span>`).join('');

// report grid
const letters = 'ABCDEFGHIJKLMNO'.split('');
const fill = (list, icon) => letters.map((_, i) => i < list.length ? `<td>${icon}${list[i]}</td>` : '<td></td>').join('');
const arrow = '<svg class="dn" viewBox="0 0 6 7"><path d="M3 0v6M1 4l2 2 2-2"/></svg>';
const m = s => `<span class="mm">${s}</span>`;
const heads = ['地区', '销售员', '产品类型', '产品', '&nbsp;'];
const cells = [m('ds1.S(') + '地区' + m(')'), m('ds1.G(') + '销售<br>员' + m(')'), m('ds1.G(') + '产品<br>类型' + m(')'), m('ds1.G(') + '产品' + m(')'), ''];
let html = '<colgroup><col style="width:25px">' + '<col style="width:90px">'.repeat(15) + '</colgroup><thead><tr><th><svg class="mx-auto" width="11" height="9" viewBox="0 0 11 9"><path d="M0 1h11M0 4.500h11M0 8h11" stroke="#666" stroke-width="2" stroke-dasharray="2 2"/></svg></th>' + letters.map(c => `<th>${c}</th>`).join('') + '</tr></thead><tbody>';
html += `<tr class="hcell" style="height:44px"><th class="hrow">1(H)</th>${fill(heads, '')}</tr>`;
html += `<tr class="dcell" style="height:51px"><th>2</th>${fill(cells, arrow)}</tr>`;
for (let r = 3; r < 30; r++) html += `<tr style="height:${(r - 3) % 4 ? 24 : 23}px"><th${r === 9 ? ' class="sel"' : ''}>${r}</th>${fill([], '')}</tr>`;
$('report').innerHTML = html + '</tbody>';

// formula dialog lists
const list = (id, items, hit) => $(id).innerHTML = items.map(t => `<li${t === hit ? ' class="hit"' : ''}>${t}</li>`).join('');
list('kinds', ['常用函数','新增函数','数学和三角函数','文本函数','日期和时间函数','逻辑函数','数组函数','报表函数','其它函数','层次坐标函数','全部函数','自定义函数','插件函数'], '报表函数');
list('funcs', 'COL COLCOUNT COLNAME DECODE ENCODE FIELDS MAP RECORDS ROW ROWCOUNT SQL TABLEDATAFIELDS TABLEDATAS TABLES VALUE I18N TREEDEFAULTPATH'.split(' '), 'TABLEDATAFIELDS');
const kids = '$$page_number $$totalPage_number $fine_username $fine_role $fine_position NULL NOFILTER reportName formletName servletURL serverSchema serverName serverPort serverURL contextPath sessionID'.split(' ');
$('vars').innerHTML = '<li class="top"><svg viewBox="0 0 16 15"><path d="M2 2h12v10H2z" fill="#fff" stroke="#0a0a96" stroke-width="2"/><path d="M4 5h3v4H4z" fill="#f3d743" stroke="#333"/><path d="M9 5h4M9 7.500h4M9 10h4"/></svg>数据项</li>'
 + '<li class="top"><i class="tri"></i><svg viewBox="0 0 16 15"><path d="M3 3h3v3H3zM10 3h3v3h-3zM4 9h3v3H4zM10 9h3v3h-3z" fill="#111" stroke="none"/><path d="M5 5l6 5M11 5l-6 5" stroke="#111" stroke-width="1.500"/><path d="M11 4h1v1h-1z" fill="#3c9" stroke="none"/><path d="M12 11h2v1h-2z" fill="#cc3" stroke="none"/></svg>变量 <span class="mn">- [16]</span></li>'
 + kids.map(k => `<li class="kid mn">${k}</li>`).join('')
 + '<li class="top"><i class="tri"></i><svg viewBox="0 0 16 15"><path d="M4 1h4v4H4zM0 4h4v4H0z" stroke="#3c3c96"/><path d="M8 6H6v8h2M13 6h2v8h-2M9.500 8.500q2-2 2.500 0L10.500 11M10.500 12v1" stroke="#333"/></svg>数据集参数 <span class="mn">- [1]</span></li><li class="kid mn">$col</li><li class="vbar position-absolute"></li>';

// tutorial marks: [x, y, width, height] frames and [text, x, y] numbers
const frames = [[149,109,733,49],[1388,122,63,42],[1444,227,45,28],[1638,629,44,39],[397,197,122,39],[866,224,210,39],[357,386,245,53],[1067,556,95,42],[1124,912,57,28]];
const nums = [['5.1',861,58],['5.2',1465,139],['5.3',1499,219],['5.4',1589,619],['5.5',565,194],['5.6',925,193],['5.7',611,384],['5.8',1008,577],['5.9',1135,877]];
$('marks').innerHTML = frames.map(([x, y, w, h]) => `<div class="mark-box position-absolute" style="left:${x}px;top:${y}px;width:${w}px;height:${h}px"></div>`).join('')
 + nums.map(([t, x, y]) => `<div class="mark-no position-absolute" style="left:${x}px;top:${y}px">${t}</div>`).join('');
</script>
</body>
</html>
